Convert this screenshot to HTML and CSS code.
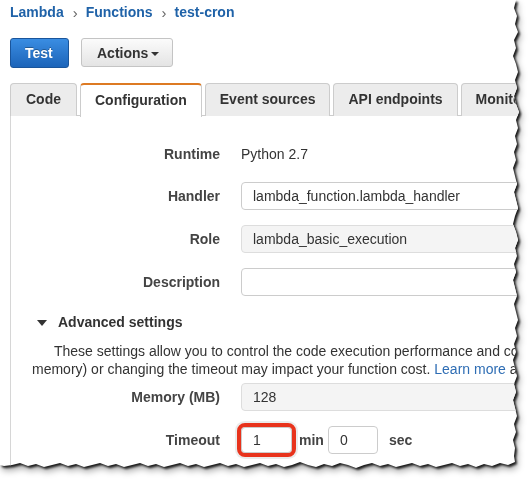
FILE: index.html
```html
<!DOCTYPE html>
<html>
<head>
<meta charset="utf-8">
<link rel="stylesheet" href="styles.css">
</head>
<body>
<div class="frame">
  <div class="page">
    <nav class="crumbs">
      <a class="crumb">Lambda</a><span class="sep">›</span><a class="crumb">Functions</a><span class="sep">›</span><a class="crumb">test-cron</a>
    </nav>
    <div class="toolbar">
      <button class="btn btn-primary">Test</button>
      <button class="btn btn-default">Actions<span class="caret"></span></button>
    </div>
    <div class="tabs">
      <div class="tab">Code</div>
      <div class="tab active">Configuration</div>
      <div class="tab">Event sources</div>
      <div class="tab">API endpoints</div>
      <div class="tab">Monitoring</div>
    </div>
    <div class="panel">
      <div class="form">
        <div class="row row-static">
          <div class="label">Runtime</div>
          <div class="value">Python 2.7</div>
        </div>
        <div class="row">
          <div class="label">Handler</div>
          <div class="value"><input class="field wide" value="lambda_function.lambda_handler"></div>
        </div>
        <div class="row">
          <div class="label">Role</div>
          <div class="value"><input class="field wide readonly" value="lambda_basic_execution"></div>
        </div>
        <div class="row">
          <div class="label">Description</div>
          <div class="value"><input class="field wide" value=""></div>
        </div>
      </div>
      <div class="advanced">
        <span class="tri"></span><span class="adv-title">Advanced settings</span>
      </div>
      <p class="help">These settings allow you to control the code execution performance and costs for<br>memory) or changing the timeout may impact your function cost. <a class="link">Learn more</a> about</p>
      <div class="form form-adv">
        <div class="row">
          <div class="label">Memory (MB)</div>
          <div class="value"><input class="field wide readonly" value="128"></div>
        </div>
        <div class="row">
          <div class="label">Timeout</div>
          <div class="value timeout">
            <input class="field small highlight" value="1">
            <span class="unit">min</span>
            <input class="field small" value="0">
            <span class="unit unit-sec">sec</span>
          </div>
        </div>
      </div>
    </div>
  </div>
</div>
</body>
</html>
```
FILE: styles.css
```css
* { box-sizing: border-box; }
html, body { margin: 0; padding: 0; background: #fff; }
.frame {
  width: 530px;
  height: 483px;
  overflow: hidden;
  filter: drop-shadow(2px 2px 1px rgba(0,0,0,0.85)) drop-shadow(1px 3px 3px rgba(0,0,0,0.35));
}
.page {
  width: 530px;
  height: 483px;
  background: #fff;
  padding-left: 10px;
  font-family: "Liberation Sans", Arial, sans-serif;
  font-size: 14px;
  color: #333;
  overflow: hidden;
  clip-path: polygon(0 0, 516px 0, 514px 8px, 517px 16px, 515px 24px, 518px 32px, 514px 40px, 516px 48px, 513px 56px, 516px 64px, 518px 72px, 515px 80px, 517px 88px, 514px 96px, 516px 104px, 519px 112px, 516px 120px, 518px 128px, 515px 136px, 517px 144px, 514px 152px, 516px 160px, 513px 168px, 515px 176px, 517px 184px, 514px 192px, 516px 200px, 518px 208px, 515px 216px, 513px 224px, 516px 232px, 518px 240px, 515px 248px, 517px 256px, 514px 264px, 516px 272px, 513px 280px, 515px 288px, 517px 296px, 514px 304px, 516px 312px, 518px 320px, 515px 328px, 517px 336px, 514px 344px, 516px 352px, 513px 360px, 515px 368px, 517px 376px, 514px 384px, 516px 392px, 513px 400px, 515px 408px, 517px 416px, 514px 424px, 516px 432px, 513px 440px, 515px 448px, 514px 456px, 515px 462px, 508px 465px, 500px 463px, 492px 466px, 484px 464px, 476px 467px, 468px 464px, 460px 466px, 452px 463px, 444px 465px, 436px 467px, 428px 464px, 420px 466px, 412px 463px, 404px 465px, 396px 467px, 388px 464px, 380px 466px, 372px 463px, 364px 465px, 356px 468px, 348px 465px, 340px 463px, 332px 466px, 324px 464px, 316px 467px, 308px 465px, 300px 462px, 292px 465px, 284px 467px, 276px 464px, 268px 466px, 260px 463px, 252px 465px, 244px 467px, 236px 464px, 228px 466px, 220px 463px, 212px 465px, 204px 467px, 196px 464px, 188px 466px, 180px 463px, 172px 465px, 164px 467px, 156px 464px, 148px 466px, 140px 463px, 132px 465px, 124px 467px, 116px 464px, 108px 466px, 100px 463px, 92px 465px, 84px 467px, 76px 464px, 68px 466px, 60px 463px, 52px 465px, 44px 467px, 36px 464px, 28px 466px, 20px 463px, 12px 465px, 4px 466px, 0 465px);
}

/* breadcrumbs */
.crumbs {
  display: flex;
  align-items: center;
  height: 20px;
  margin-top: 2px;
  white-space: nowrap;
}
.crumb {
  color: #1f62a8;
  font-weight: bold;
  font-size: 14px;
  line-height: 20px;
}
.sep {
  color: #666;
  font-size: 15px;
  margin: 2px 8px 0 9px;
  line-height: 20px;
}

/* toolbar */
.toolbar {
  display: flex;
  gap: 12px;
  margin-top: 16px;
}
.btn {
  font-family: "Liberation Sans", Arial, sans-serif;
  font-size: 14px;
  font-weight: bold;
  height: 30px;
  border-radius: 3px;
  margin: 0;
  cursor: pointer;
  display: flex;
  align-items: center;
}
.btn-primary {
  padding: 0 14px;
  color: #fff;
  background: linear-gradient(#3a8de2, #1c64b9);
  border: 1px solid #1a559b;
  text-shadow: 0 -1px 0 rgba(0,0,0,0.3);
  width: 59px;
}
.btn-default {
  padding: 0 14px 0 15px;
  color: #333;
  background: linear-gradient(#fbfbfb, #e4e4e4);
  border: 1px solid #c4c4c4;
  width: 92px;
  height: 29px;
}
.caret {
  display: inline-block;
  width: 0;
  height: 0;
  margin-left: 3px;
  margin-top: 2px;
  border-left: 4px solid transparent;
  border-right: 4px solid transparent;
  border-top: 4px solid #333;
}

/* tabs */
.tabs {
  display: flex;
  gap: 3px;
  margin-top: 15px;
  border-bottom: 1px solid #ccc;
  height: 33px;
  white-space: nowrap;
}
.tab {
  flex: none;
  height: 33px;
  padding: 0 14px;
  line-height: 31px;
  font-weight: bold;
  color: #333;
  background: #ececec;
  border: 1px solid #ccc;
  border-bottom: none;
  border-radius: 4px 4px 0 0;
}
.tab:first-child { padding: 0 15px; }
.tab.active {
  background: #fff;
  border-top: 2px solid #dd7a23;
  line-height: 30px;
  height: 34px;
  margin-bottom: -1px;
}

/* panel */
.panel {
  border-left: 1px solid #d6d6d6;
  height: 400px;
  padding-top: 24px;
}
.form {
  display: flex;
  flex-direction: column;
  gap: 15px;
}
.row {
  display: flex;
  align-items: center;
  height: 28px;
  gap: 21px;
}
.row-static { height: 27px; }
.label {
  flex: none;
  width: 209px;
  text-align: right;
  font-weight: bold;
  color: #444;
}
.value {
  flex: none;
  display: flex;
  align-items: center;
  white-space: nowrap;
}
.field {
  font-family: "Liberation Sans", Arial, sans-serif;
  font-size: 14px;
  color: #333;
  height: 28px;
  padding: 0 11px;
  border: 1px solid #ccc;
  border-radius: 4px;
  background: #fff;
  margin: 0;
  outline: none;
}
.wide { width: 320px; }
.readonly { background: #f4f4f4; border-color: #ddd; }
.small { width: 50px; }
.highlight {
  outline: 4px solid #e8331c;
  outline-offset: 0;
  width: 51px;
  height: 26px;
  margin-top: -1px;
  box-shadow: 0 0 0 6px rgba(0,0,0,0.08);
}
.unit {
  font-weight: bold;
  color: #444;
  margin: 0 4px 0 7px;
}
.unit-sec { margin: 0 0 0 11px; }

/* advanced */
.advanced {
  display: flex;
  align-items: center;
  margin-top: 16px;
  padding-left: 26px;
  height: 20px;
}
.tri {
  width: 0;
  height: 0;
  border-left: 5px solid transparent;
  border-right: 5px solid transparent;
  border-top: 6px solid #333;
  margin-right: 11px;
  margin-top: 1px;
}
.adv-title {
  font-weight: bold;
  color: #333;
}
.help {
  margin: 10px 0 0 0;
  padding-left: 21px;
  text-indent: 22px;
  line-height: 18px;
  white-space: nowrap;
  color: #333;
}
.link { color: #2e6db4; }
.form-adv { margin-top: 5px; }
```
